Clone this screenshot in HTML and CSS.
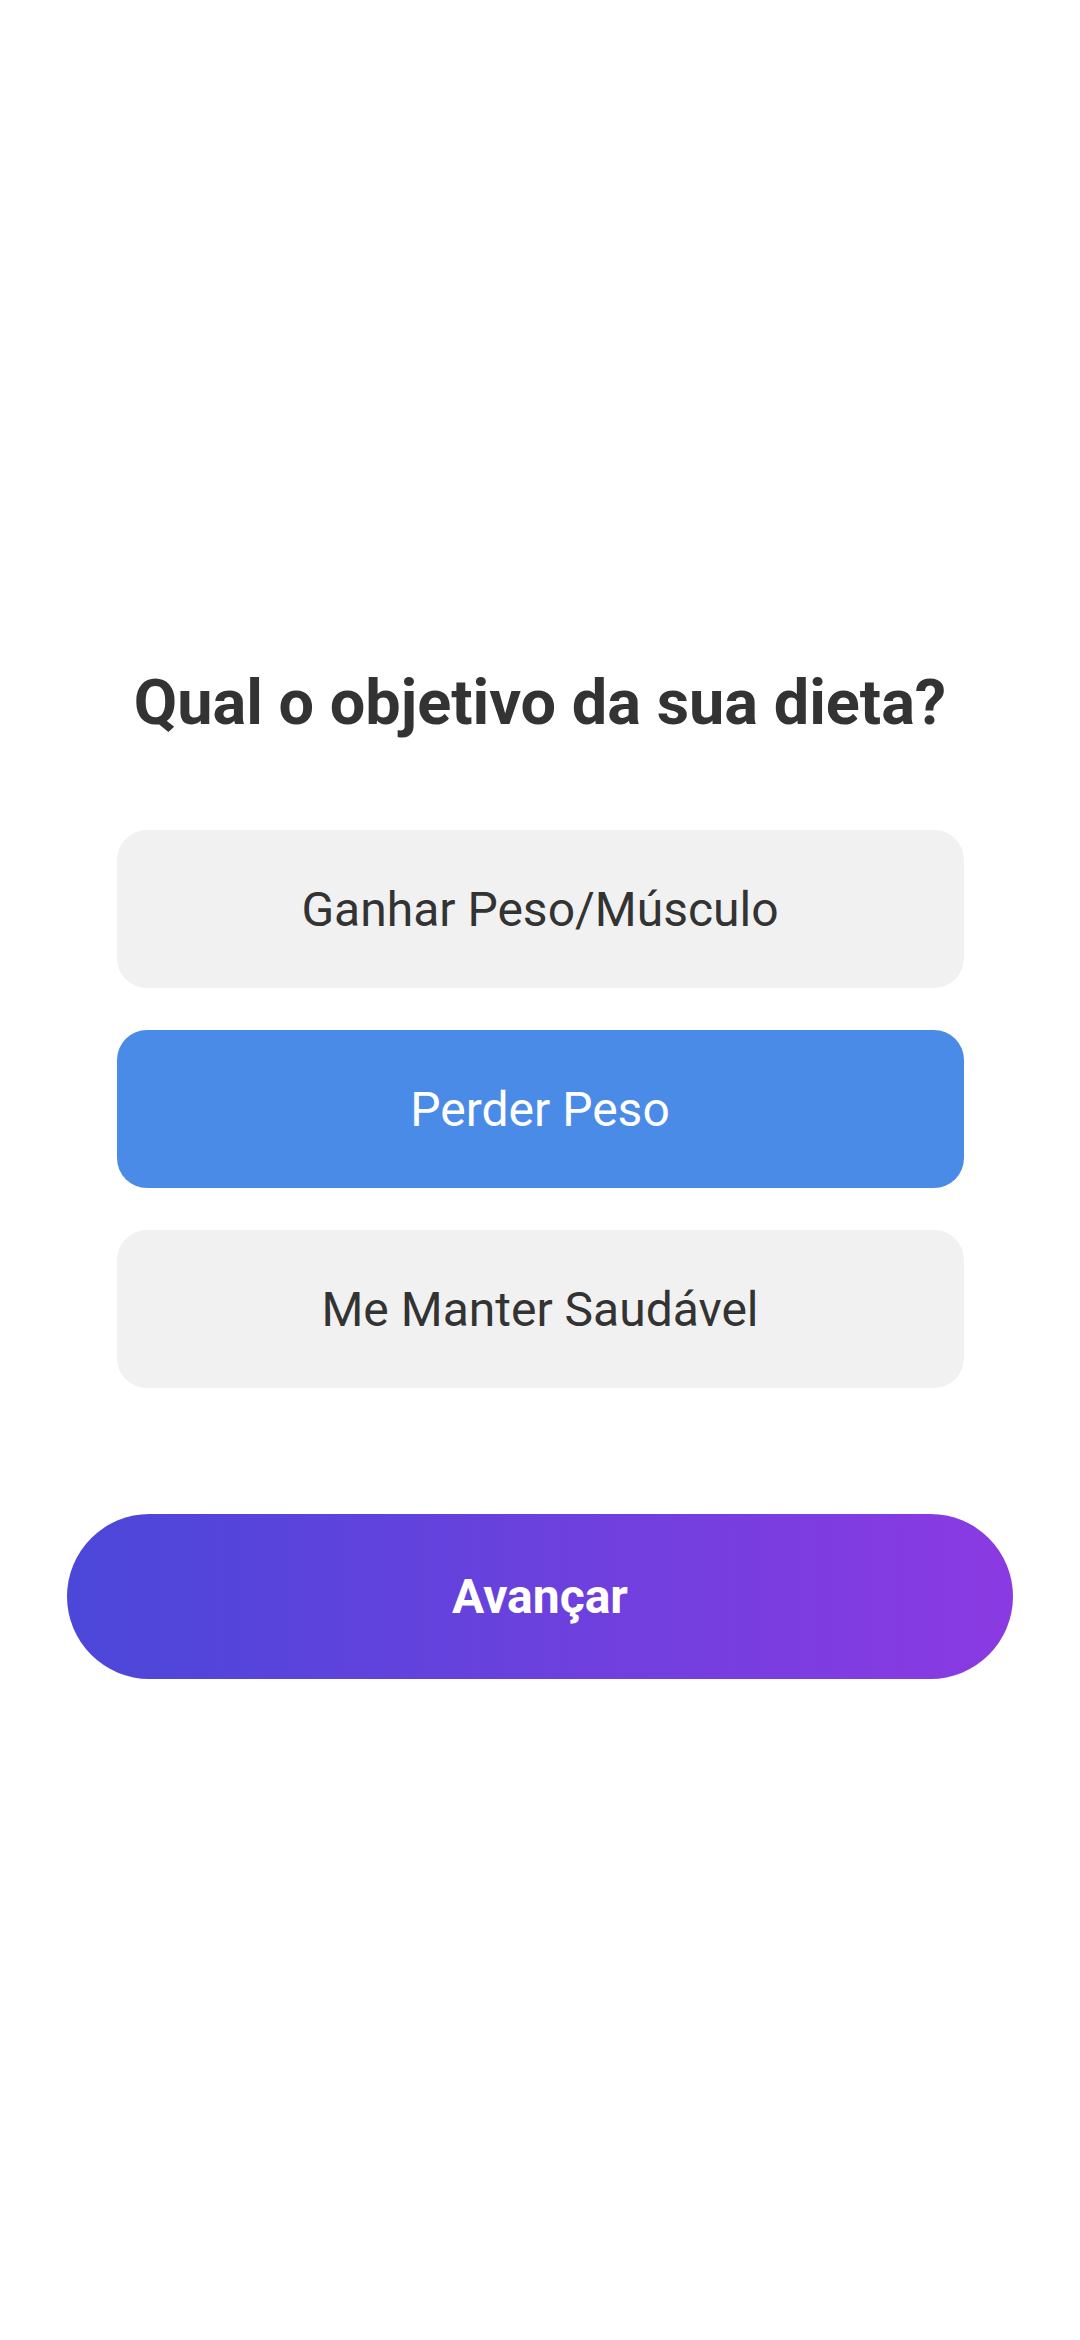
FILE: index.html
```html
<!DOCTYPE html>
<html lang="pt-BR">
<head>
<meta charset="utf-8">
<title>Objetivo da dieta</title>
<link rel="stylesheet" href="styles.css">
</head>
<body>
<main class="screen">
  <h1 class="title">Qual o objetivo da sua dieta?</h1>
  <div class="options">
    <button class="option">Ganhar Peso/Músculo</button>
    <button class="option option--selected">Perder Peso</button>
    <button class="option">Me Manter Saudável</button>
  </div>
  <button class="next">Avançar</button>
</main>
</body>
</html>
```
FILE: styles.css
```css
html, body {
  margin: 0;
  padding: 0;
  background: #ffffff;
}
body {
  width: 1080px;
  height: 2340px;
  font-family: Roboto, "Noto Sans", sans-serif;
  color: #333333;
}
.screen {
  display: flex;
  flex-direction: column;
  align-items: center;
  padding-top: 665px;
}
.title {
  margin: 0;
  font-size: 63px;
  line-height: 76px;
  font-weight: 700;
  color: #333333;
  text-align: center;
}
.options {
  display: flex;
  flex-direction: column;
  gap: 42px;
  width: 847px;
  margin-top: 89px;
}
.option {
  height: 158px;
  border: none;
  border-radius: 30px;
  background: #f1f1f1;
  color: #333333;
  font-family: Roboto, "Noto Sans", sans-serif;
  font-size: 48px;
  font-weight: 400;
  display: flex;
  align-items: center;
  justify-content: center;
  padding: 0;
}
.option--selected {
  background: #4a8be8;
  color: #ffffff;
}
.next {
  margin-top: 126px;
  width: 946px;
  height: 165px;
  border: none;
  border-radius: 83px;
  background: linear-gradient(to right, #4b47d9, #8b3ae2);
  color: #ffffff;
  font-family: Roboto, "Noto Sans", sans-serif;
  font-size: 48px;
  font-weight: 700;
  padding: 0;
}
```
